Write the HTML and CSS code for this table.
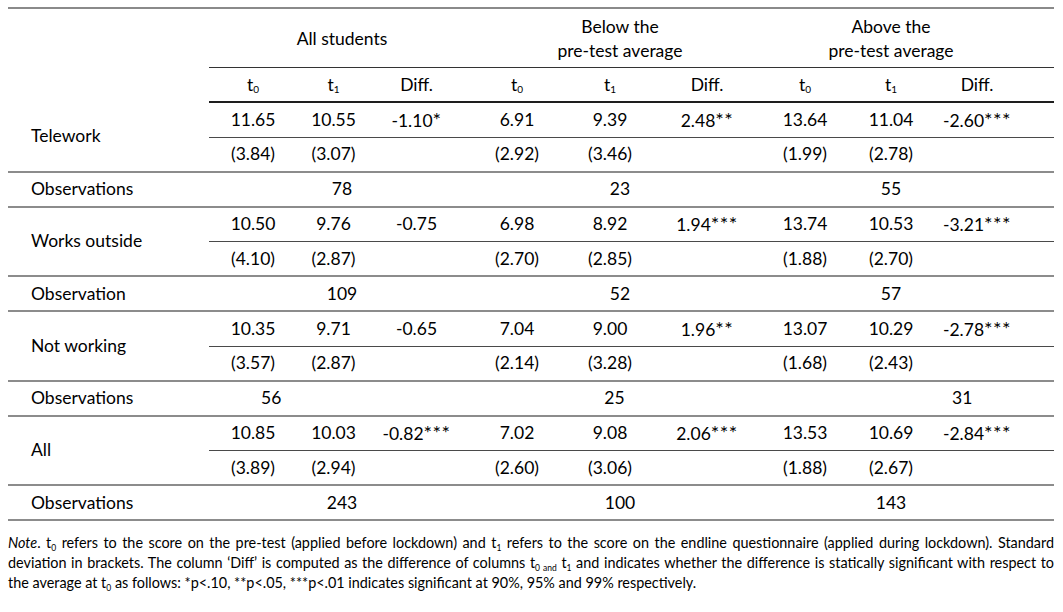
FILE: index.html
```html
<!DOCTYPE html>
<html lang="en">
<head>
<meta charset="utf-8">
<title>Scores by work status</title>
<link rel="stylesheet" href="styles.css">
</head>
<body>
<div class="page">
<table class="results">
  <colgroup>
    <col class="c-label">
    <col class="c-a">
    <col class="c-b">
    <col class="c-c">
    <col class="c-d">
    <col class="c-e">
    <col class="c-f">
    <col class="c-g">
    <col class="c-h">
    <col class="c-i">
    <col class="c-pad">
  </colgroup>
  <thead>
    <tr class="group-row">
      <th class="blank" rowspan="2"></th>
      <th class="group" colspan="3">All students</th>
      <th class="group" colspan="3">Below the<br>pre-test average</th>
      <th class="group" colspan="3">Above the<br>pre-test average</th>
      <th class="group"></th>
    </tr>
    <tr class="col-row">
      <th>t<sub>0</sub></th>
      <th>t<sub>1</sub></th>
      <th class="diff">Diff.</th>
      <th>t<sub>0</sub></th>
      <th>t<sub>1</sub></th>
      <th class="diff2">Diff.</th>
      <th>t<sub>0</sub></th>
      <th>t<sub>1</sub></th>
      <th>Diff.</th>
      <th></th>
    </tr>
  </thead>
  <tbody>
    <tr class="mean">
      <td class="label" rowspan="2">Telework</td>
      <td>11.65</td><td>10.55</td><td class="diff">-1.10<span class="sig">*</span></td>
      <td>6.91</td><td>9.39</td><td class="diff2">2.48<span class="sig">**</span></td>
      <td>13.64</td><td>11.04</td><td>-2.60<span class="sig">***</span></td><td></td>
    </tr>
    <tr class="sd">
      <td>(3.84)</td><td>(3.07)</td><td></td>
      <td>(2.92)</td><td>(3.46)</td><td></td>
      <td>(1.99)</td><td>(2.78)</td><td></td><td></td>
    </tr>
    <tr class="obs">
      <td class="label">Observations</td>
      <td colspan="3">78</td><td colspan="3">23</td><td colspan="3">55</td><td></td>
    </tr>

    <tr class="mean">
      <td class="label" rowspan="2">Works outside</td>
      <td>10.50</td><td>9.76</td><td class="diff">-0.75</td>
      <td>6.98</td><td>8.92</td><td class="diff2">1.94<span class="sig">***</span></td>
      <td>13.74</td><td>10.53</td><td>-3.21<span class="sig">***</span></td><td></td>
    </tr>
    <tr class="sd">
      <td>(4.10)</td><td>(2.87)</td><td></td>
      <td>(2.70)</td><td>(2.85)</td><td></td>
      <td>(1.88)</td><td>(2.70)</td><td></td><td></td>
    </tr>
    <tr class="obs">
      <td class="label">Observation</td>
      <td colspan="3">109</td><td colspan="3">52</td><td colspan="3">57</td><td></td>
    </tr>

    <tr class="mean">
      <td class="label" rowspan="2">Not working</td>
      <td>10.35</td><td>9.71</td><td class="diff">-0.65</td>
      <td>7.04</td><td>9.00</td><td class="diff2">1.96<span class="sig">**</span></td>
      <td>13.07</td><td>10.29</td><td>-2.78<span class="sig">***</span></td><td></td>
    </tr>
    <tr class="sd">
      <td>(3.57)</td><td>(2.87)</td><td></td>
      <td>(2.14)</td><td>(3.28)</td><td></td>
      <td>(1.68)</td><td>(2.43)</td><td></td><td></td>
    </tr>
    <tr class="obs">
      <td class="label">Observations</td>
      <td colspan="3" class="obs-left">56</td><td colspan="3" class="obs-shift">25</td><td colspan="3" class="obs-right">31</td><td></td>
    </tr>

    <tr class="mean">
      <td class="label" rowspan="2">All</td>
      <td>10.85</td><td>10.03</td><td class="diff">-0.82<span class="sig">***</span></td>
      <td>7.02</td><td>9.08</td><td class="diff2">2.06<span class="sig">***</span></td>
      <td>13.53</td><td>10.69</td><td>-2.84<span class="sig">***</span></td><td></td>
    </tr>
    <tr class="sd">
      <td>(3.89)</td><td>(2.94)</td><td></td>
      <td>(2.60)</td><td>(3.06)</td><td></td>
      <td>(1.88)</td><td>(2.67)</td><td></td><td></td>
    </tr>
    <tr class="obs last">
      <td class="label">Observations</td>
      <td colspan="3">243</td><td colspan="3">100</td><td colspan="3">143</td><td></td>
    </tr>
  </tbody>
</table>

<div class="note">
  <p class="line full"><em>Note</em>. t<sub>0</sub> refers to the score on the pre-test (applied before lockdown) and t<sub>1</sub> refers to the score on the endline questionnaire (applied during lockdown). Standard</p>
  <p class="line full">deviation in brackets. The column ‘Diff’ is computed as the difference of columns t<sub>0 and</sub> t<sub>1</sub> and indicates whether the difference is statically significant with respect to</p>
  <p class="line">the average at t<sub>0</sub> as follows: *p&lt;.10, **p&lt;.05, ***p&lt;.01 indicates significant at 90%, 95% and 99% respectively.</p>
</div>
</div>
</body>
</html>
```

FILE: styles.css
```css
html, body {
  margin: 0;
  padding: 0;
  background: #ffffff;
}

.page {
  padding: 7px 9px 0 8px;
  font-family: Lato, "Open Sans", sans-serif;
  color: #000000;
}

.results {
  border-collapse: collapse;
  table-layout: fixed;
  width: 1046px;
  font-size: 17.5px;
}

.c-label { width: 201px; }
.c-a { width: 88px; }
.c-b { width: 73px; }
.c-c { width: 105px; }
.c-d { width: 84px; }
.c-e { width: 102px; }
.c-f { width: 104px; }
.c-g { width: 80px; }
.c-h { width: 92px; }
.c-i { width: 80px; }
.c-pad { width: 37px; }

.results th,
.results td {
  padding: 0;
  text-align: center;
  font-weight: normal;
  vertical-align: middle;
  white-space: nowrap;
  line-height: 20px;
}

.results sub {
  font-size: 10px;
  vertical-align: -2px;
  line-height: 0;
}

.results .sig {
  font-size: 20px;
  letter-spacing: 0.5px;
}

.group-row th {
  border-top: 2px solid #8a8a8a;
  height: 57px;
  line-height: 24px;
  padding-top: 1px;
}

.group-row th.group {
  border-bottom: 1.5px solid #333333;
}

.col-row th {
  height: 33px;
  border-bottom: 2px solid #1e1e1e;
}

.results .diff { padding-right: 12px; }
.results .diff2 { padding-right: 12px; }

.results td.label {
  text-align: left;
  padding-left: 23px;
}

.mean td {
  height: 33.5px;
  border-bottom: 1.5px solid #4a4a4a;
}

.mean td.label {
  border-bottom: 2px solid #8c8c8c;
}

.sd td,
.obs td {
  height: 33px;
  border-bottom: 2px solid #8c8c8c;
}

.results td.obs-left {
  text-align: left;
  padding-left: 52px;
}

.results td.obs-shift {
  padding-right: 11px;
}

.results td.obs-right {
  text-align: left;
  padding-left: 187px;
}

.note {
  margin-top: 12px;
  font-size: 14.4px;
  line-height: 20px;
  color: #000000;
  width: 1046px;
}

.note .line {
  margin: 0;
  white-space: nowrap;
}

.note .line.full {
  text-align: justify;
  text-align-last: justify;
}

.note sub {
  font-size: 8.5px;
  vertical-align: -3px;
  line-height: 0;
}
```
